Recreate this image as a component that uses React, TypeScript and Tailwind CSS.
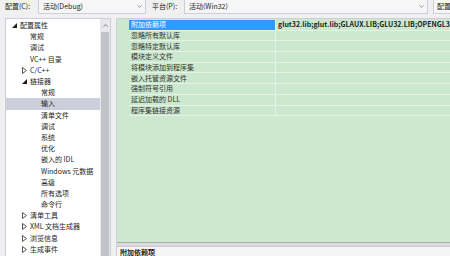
import { ChevronDown, ChevronUp } from 'lucide-react'

type Node = { label: string; level: number; arrow?: 'open' | 'closed'; selected?: boolean }

const TREE: Node[] = [
  { label: '配置属性', level: 0, arrow: 'open' },
  { label: '常规', level: 1 },
  { label: '调试', level: 1 },
  { label: 'VC++ 目录', level: 1 },
  { label: 'C/C++', level: 1, arrow: 'closed' },
  { label: '链接器', level: 1, arrow: 'open' },
  { label: '常规', level: 2 },
  { label: '输入', level: 2, selected: true },
  { label: '清单文件', level: 2 },
  { label: '调试', level: 2 },
  { label: '系统', level: 2 },
  { label: '优化', level: 2 },
  { label: '嵌入的 IDL', level: 2 },
  { label: 'Windows 元数据', level: 2 },
  { label: '高级', level: 2 },
  { label: '所有选项', level: 2 },
  { label: '命令行', level: 2 },
  { label: '清单工具', level: 1, arrow: 'closed' },
  { label: 'XML 文档生成器', level: 1, arrow: 'closed' },
  { label: '浏览信息', level: 1, arrow: 'closed' },
  { label: '生成事件', level: 1, arrow: 'closed' },
]

const PROPS = [
  '附加依赖项',
  '忽略所有默认库',
  '忽略特定默认库',
  '模块定义文件',
  '将模块添加到程序集',
  '嵌入托管资源文件',
  '强制符号引用',
  '延迟加载的 DLL',
  '程序集链接资源',
]

const INDENT = ['pl-[6px]', 'pl-[16px]', 'pl-[27px]']

function Arrow({ kind }: { kind: 'open' | 'closed' }) {
  return kind === 'open' ? (
    <svg width="5" height="5" viewBox="0 0 5 5" className="shrink-0">
      <path d="M5 0 L5 5 L0 5 Z" fill="#1e1e1e" />
    </svg>
  ) : (
    <svg width="5" height="7" viewBox="0 0 5 7" className="shrink-0">
      <path d="M0.5 0.5 L4.5 3.5 L0.5 6.5 Z" fill="none" stroke="#555" strokeWidth="1" />
    </svg>
  )
}

function Dropdown({ text, width }: { text: string; width: string }) {
  return (
    <div className={`flex h-[14px] shrink-0 items-center justify-between border border-t-0 border-[#cccedb] bg-[#f6f6f6] pl-[4px] pr-[2px] ${width}`}>
      <span className="whitespace-nowrap">{text}</span>
      <ChevronDown className="h-[7px] w-[7px] text-[#555]" strokeWidth={2} />
    </div>
  )
}

export default function App() {
  return (
    <div className="h-[256px] w-[450px] overflow-hidden bg-[#f0f0f0] text-[7px] leading-none text-[#1e1e1e] [font-family:'Noto_Sans_CJK_SC','Noto_Sans',sans-serif]">
      {/* toolbar */}
      <div className="flex h-[18px] items-start whitespace-nowrap">
        <span className="ml-[5px] mt-[3px] w-[33px] shrink-0">配置(C):</span>
        <Dropdown text="活动(Debug)" width="w-[108px]" />
        <span className="ml-[6px] mt-[3px] w-[32px] shrink-0">平台(P):</span>
        <Dropdown text="活动(Win32)" width="w-[244px]" />
        <div className="ml-[5px] flex h-[14px] min-w-0 flex-1 items-center overflow-hidden border border-r-0 border-t-0 border-[#cccedb] bg-[#f6f6f6] pl-[3px]">配置</div>
      </div>

      <div className="flex h-[238px] items-stretch">
        {/* tree */}
        <div className="ml-[5px] flex w-[106px] shrink-0 border border-b-0 border-[#cccedb] bg-white">
          <div className="min-w-0 flex-1 pt-[1px]">
            {TREE.map((n, i) => (
              <div
                key={i}
                className={`flex h-[11.2px] items-center whitespace-nowrap ${INDENT[n.level]} ${n.selected ? 'bg-[#cccedb]' : ''}`}
              >
                <span className="flex w-[8px] shrink-0 justify-start">{n.arrow && <Arrow kind={n.arrow} />}</span>
                <span>{n.label}</span>
              </div>
            ))}
          </div>
          <div className="flex w-[10px] shrink-0 flex-col bg-[#e8e8ec]">
            <div className="flex h-[13px] items-center justify-center">
              <ChevronUp className="h-[7px] w-[7px] text-[#555]" strokeWidth={2.5} />
            </div>
            <div className="mx-[1px] flex-1 bg-[#c2c3c9]" />
          </div>
        </div>

        {/* property grid */}
        <div className="ml-[5px] flex min-w-0 flex-1 flex-col border-l border-t border-[#cccedb]">
          <div className="flex h-[228px] bg-[#cce8cf]">
            <div className="w-[12px] shrink-0" />
            <div className="flex min-w-0 flex-1 flex-col pt-[1px]">
              {PROPS.map((p, i) => (
                <div key={i} className="flex h-[10.7px] border-b border-[#e4f3e6]">
                  <div className={`flex w-[146px] shrink-0 items-center whitespace-nowrap pl-[2px] ${i === 0 ? 'bg-[#3399ff] text-white' : 'text-[#333]'}`}>{p}</div>
                  <div className="flex min-w-0 flex-1 items-center overflow-hidden whitespace-nowrap border-l border-[#e4f3e6] pl-[2px] font-bold text-[#1e1e1e]">
                    {i === 0 ? 'glut32.lib;glut.lib;GLAUX.LIB;GLU32.LIB;OPENGL32.lib;%(AdditionalDependencies)' : ''}
                  </div>
                </div>
              ))}
            </div>
          </div>
          <div className="h-[1px] bg-[#a9aaae]" />
          <div className="h-[3px] bg-[#dcdce0]" />
          <div className="h-[1px] bg-[#c8c8cc]" />
          <div className="flex-1 bg-[#f5f5f5] pl-[3px] pt-[2px] font-bold">附加依赖项</div>
        </div>
      </div>
    </div>
  )
}
